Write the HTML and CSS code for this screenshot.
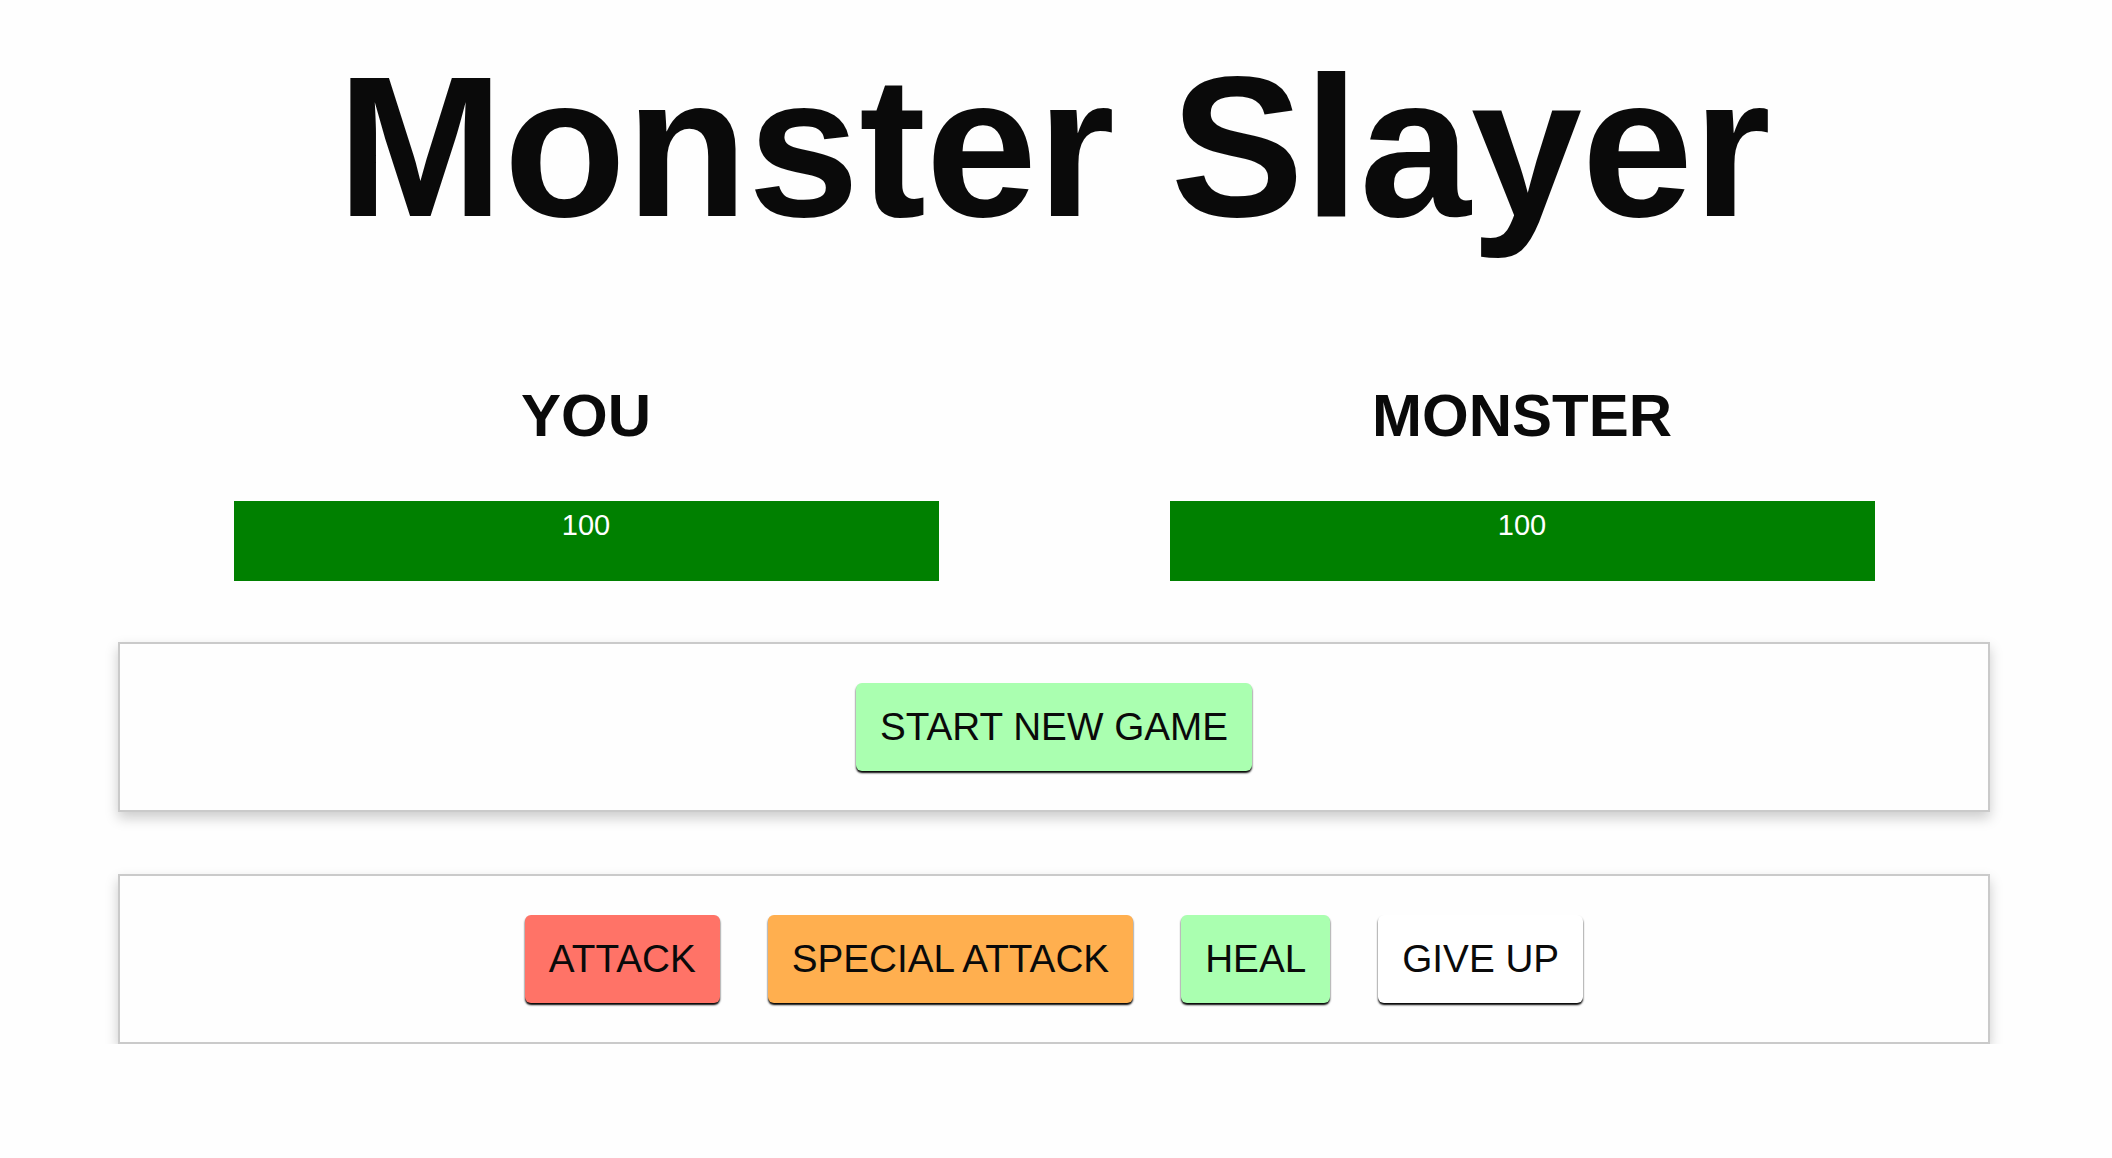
FILE: index.html
```html
<!DOCTYPE html>
<html lang="en">
<head>
<meta charset="utf-8">
<title>Monster Slayer</title>
<link rel="stylesheet" href="styles.css">
</head>
<body>
<div class="page">
  <h1 class="title">Monster Slayer</h1>
  <section class="stats">
    <div class="stat">
      <h2 class="stat-name">YOU</h2>
      <div class="healthbar">
        <div class="healthbar-value" style="width: 100%;">100</div>
      </div>
    </div>
    <div class="stat">
      <h2 class="stat-name">MONSTER</h2>
      <div class="healthbar">
        <div class="healthbar-value" style="width: 100%;">100</div>
      </div>
    </div>
  </section>
  <section class="panel panel-start">
    <button class="btn btn-start">START NEW GAME</button>
  </section>
  <section class="panel panel-controls">
    <button class="btn btn-attack">ATTACK</button>
    <button class="btn btn-special">SPECIAL ATTACK</button>
    <button class="btn btn-heal">HEAL</button>
    <button class="btn btn-giveup">GIVE UP</button>
  </section>
</div>
</body>
</html>
```
FILE: styles.css
```css
* {
  box-sizing: border-box;
}

html, body {
  margin: 0;
  padding: 0;
  background: #fefefe;
  color: #0a0a0a;
  font-family: "Liberation Sans", Arial, Helvetica, sans-serif;
}

.page {
  width: 1872px;
  margin-left: 118px;
}

.title {
  margin: 0;
  padding-top: 32px;
  font-size: 200px;
  line-height: 230px;
  font-weight: 700;
  text-align: center;
}

.stats {
  display: grid;
  grid-template-columns: 1fr 1fr;
  margin-top: 118px;
}

.stat {
  display: flex;
  flex-direction: column;
  align-items: center;
}

.stat-name {
  margin: 0 0 49px;
  font-size: 60px;
  line-height: 72px;
  font-weight: 700;
}

.healthbar {
  width: 705px;
  height: 80px;
  background: #eeeeee;
}

.healthbar-value {
  height: 100%;
  background: #008000;
  color: #ffffff;
  font-size: 29px;
  line-height: 48px;
  text-align: center;
}

.panel {
  display: flex;
  justify-content: center;
  gap: 48px;
  padding: 19px 20px;
  border: 2px solid #cacaca;
  background: #fefefe;
  box-shadow: 0 6px 12px #cccccc;
}

.panel-start {
  margin-top: 61px;
}

.panel-controls {
  margin-top: 62px;
}

.btn {
  margin: 20px 0;
  padding: 24px;
  border: none;
  border-radius: 6px;
  font-family: "Liberation Sans", Arial, Helvetica, sans-serif;
  font-size: 38.7px;
  line-height: 40px;
  color: #0a0a0a;
  box-shadow: 0 2px 2px #000000;
  cursor: pointer;
}

.btn-start {
  background: #aaffb0;
}

.btn-attack {
  background: #ff7367;
}

.btn-special {
  background: #ffaf4f;
}

.btn-heal {
  background: #aaffb0;
}

.btn-giveup {
  background: #ffffff;
}
```
